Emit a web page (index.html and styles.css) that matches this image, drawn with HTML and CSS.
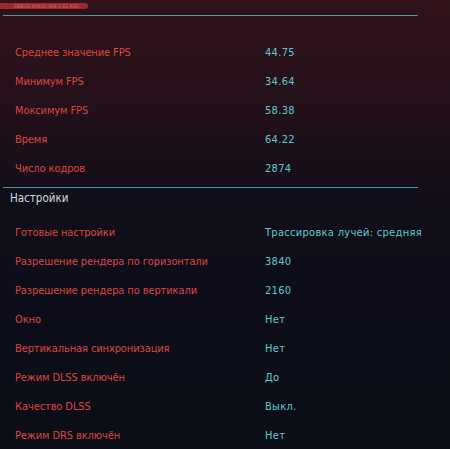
FILE: index.html
```html
<!DOCTYPE html>
<html lang="ru">
<head>
<meta charset="utf-8">
<link rel="stylesheet" href="styles.css">
</head>
<body>
<div class="page">
  <div class="badge"><span class="badge-text">DEBUG WIN10 X64 1.61 ASS</span></div>
  <div class="rule"></div>
  <div class="rows rows-stats">
    <div class="row"><span class="label">Среднее значение FPS</span><span class="value">44.75</span></div>
    <div class="row"><span class="label">Минимум FPS</span><span class="value">34.64</span></div>
    <div class="row"><span class="label">Моксимум FPS</span><span class="value">58.38</span></div>
    <div class="row"><span class="label">Время</span><span class="value">64.22</span></div>
    <div class="row"><span class="label">Число кодров</span><span class="value">2874</span></div>
  </div>
  <div class="rule"></div>
  <div class="section">Настройки</div>
  <div class="rows rows-settings">
    <div class="row"><span class="label">Готовые настройки</span><span class="value">Трассировка лучей: средняя</span></div>
    <div class="row"><span class="label">Разрешение рендера по горизонтали</span><span class="value">3840</span></div>
    <div class="row"><span class="label">Разрешение рендера по вертикали</span><span class="value">2160</span></div>
    <div class="row"><span class="label">Окно</span><span class="value">Нет</span></div>
    <div class="row"><span class="label">Вертикальная синхронизация</span><span class="value">Нет</span></div>
    <div class="row"><span class="label">Режим DLSS включён</span><span class="value">До</span></div>
    <div class="row"><span class="label">Качество DLSS</span><span class="value">Выкл.</span></div>
    <div class="row"><span class="label">Режим DRS включён</span><span class="value">Нет</span></div>
  </div>
</div>
</body>
</html>
```
FILE: styles.css
```css
html, body {
  margin: 0;
  padding: 0;
  height: 100%;
}
body {
  background: linear-gradient(180deg, #301219 0%, #22101a 25%, #120e18 45%, #0d0e19 60%, #0b0d17 100%);
  font-family: "DejaVu Sans Condensed", "DejaVu Sans", sans-serif;
  overflow: hidden;
}
.page {
  width: 450px;
  height: 449px;
  display: flex;
  flex-direction: column;
}
.badge {
  margin: 3px 0 0 0;
  width: 88px;
  height: 7px;
  background: #9a2a30;
  border-radius: 0 3px 3px 0;
  display: flex;
  align-items: center;
  padding-left: 14px;
  box-sizing: border-box;
}
.badge-text {
  color: #d9666a;
  font-size: 5px;
  line-height: 6px;
  white-space: nowrap;
}
.rule {
  margin-left: 3px;
  width: 415px;
  height: 1px;
  background: #4a97a0;
  flex: none;
}
.badge + .rule {
  margin-top: 6px;
}
.rows {
  display: flex;
  flex-direction: column;
}
.rows-stats {
  padding-top: 22px;
  padding-bottom: 4px;
}
.row {
  display: flex;
  height: 29px;
  align-items: center;
  font-size: 11px;
}
.label {
  width: 250px;
  padding-left: 15px;
  color: #dc4540;
  white-space: nowrap;
  letter-spacing: -0.1px;
}
.value {
  color: #62c8ce;
  white-space: nowrap;
  letter-spacing: 0.3px;
}
.section {
  margin-left: 3px;
  width: 415px;
  height: 24px;
  background: #0f0f1c;
  color: #d4d8de;
  font-size: 11.5px;
  display: flex;
  align-items: center;
  padding: 3px 0 0 7px;
  box-sizing: border-box;
}
.rows-settings {
  padding-top: 13px;
}
```
